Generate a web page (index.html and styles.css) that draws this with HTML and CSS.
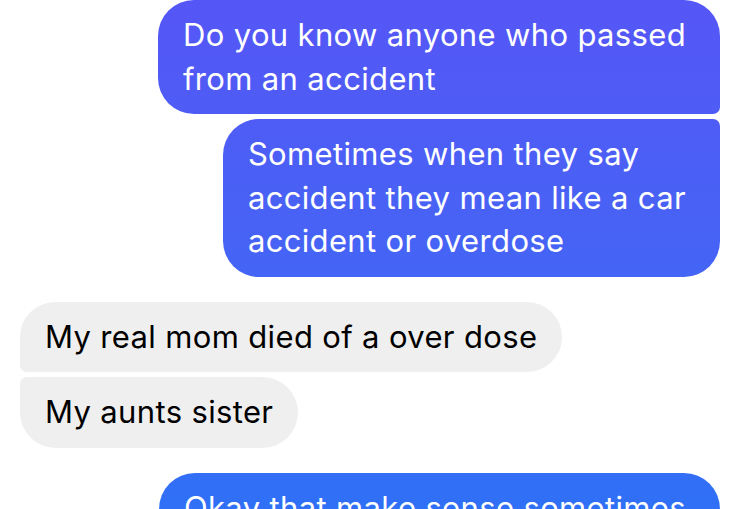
FILE: index.html
```html
<!DOCTYPE html>
<html lang="en">
<head>
<meta charset="utf-8">
<title>Messages</title>
<link rel="stylesheet" href="styles.css">
</head>
<body>
<main class="thread">
  <div class="group group-sent">
    <div class="bubble sent first">Do you know anyone who passed<br>from an accident</div>
    <div class="bubble sent last">Sometimes when they say<br>accident they mean like a car<br>accident or overdose</div>
  </div>
  <div class="group group-received">
    <div class="bubble received first">My real mom died of a over dose</div>
    <div class="bubble received last">My aunts sister</div>
  </div>
  <div class="group group-sent">
    <div class="bubble sent first">Okay that make sense sometimes<br>people say accident</div>
  </div>
</main>
</body>
</html>
```

FILE: styles.css
```css
html, body {
  margin: 0;
  padding: 0;
  background: #ffffff;
}

body {
  width: 736px;
  height: 509px;
  overflow: hidden;
  font-family: "Inter", "Roboto", "Liberation Sans", sans-serif;
}

.thread {
  display: flex;
  flex-direction: column;
  gap: 25px;
  padding: 0 16px 0 20px;
}

.group {
  display: flex;
  flex-direction: column;
  gap: 5px;
}

.group-sent {
  align-items: flex-end;
}

.group-received {
  align-items: flex-start;
}

.bubble {
  box-sizing: border-box;
  padding: 13px 34px 14px 25px;
  font-size: 31px;
  letter-spacing: 0.35px;
  line-height: 43.5px;
  border-radius: 36px;
  white-space: nowrap;
}

.sent {
  color: #ffffff;
  background: linear-gradient(to bottom, #5556f6 0px, #4862f5 220px, #2f70f6 509px) fixed;
}

.sent.first {
  border-bottom-right-radius: 7px;
}

.sent.last {
  border-top-right-radius: 7px;
}

.received {
  color: #000000;
  background: #efefef;
  padding-right: 25px;
}

.received.first {
  border-bottom-left-radius: 7px;
}

.received.last {
  border-top-left-radius: 7px;
}
```
